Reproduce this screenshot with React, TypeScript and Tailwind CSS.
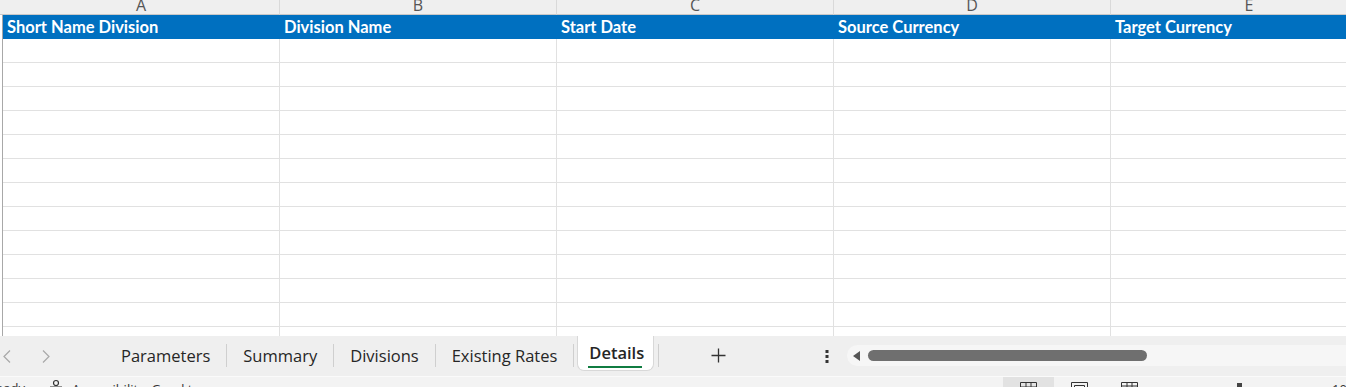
import React from 'react';

const COLS = ['A', 'B', 'C', 'D', 'E'];
const HEADERS = ['Short Name Division', 'Division Name', 'Start Date', 'Source Currency', 'Target Currency'];
const TABS = ['Parameters', 'Summary', 'Divisions', 'Existing Rates'];
const ROWS = Array.from({ length: 13 });

function Sheet() {
  return (
    <div className="flex h-[336px] overflow-hidden">
      <div className="w-[3px] shrink-0 flex flex-col">
        <div className="h-[15px] shrink-0 bg-[#efefef] border-b border-[#c8c8c8]" />
        <div className="flex-1 border-r border-[#a8a8a8]" />
      </div>
      {COLS.map((c, i) => (
        <div key={c} className="w-[277px] shrink-0 flex flex-col">
          <div className="h-[15px] shrink-0 overflow-hidden bg-[#efefef] border-b border-r border-b-[#c8c8c8] border-r-[#d9d9d9] text-center text-[16px] leading-[11px] text-[#555] font-['Open_Sans',sans-serif]">
            {c}
          </div>
          <div className="h-[24px] shrink-0 bg-[#0070c0] pl-[4px] text-white font-bold text-[16.5px] leading-[25px] font-['Lato',sans-serif] whitespace-nowrap">
            {HEADERS[i]}
          </div>
          {ROWS.map((_, r) => (
            <div key={r} className="h-[24px] shrink-0 border-b border-r border-[#e1e1e1]" />
          ))}
        </div>
      ))}
    </div>
  );
}

function Chevron({ flip }: { flip?: boolean }) {
  return (
    <svg width="8" height="13" viewBox="0 0 8 13" className={flip ? 'rotate-180' : ''}>
      <path d="M7 0.5L1 6.5l6 6" fill="none" stroke="#a8a8a8" strokeWidth="1.2" />
    </svg>
  );
}

function TabBar() {
  return (
    <div className="h-[40px] bg-[#efefef] flex items-start font-['Open_Sans',sans-serif] text-[16.5px] text-[#262626]">
      <div className="w-[105px] shrink-0 h-[34px] flex items-center pt-[6px]">
        <span className="ml-[3px]"><Chevron /></span>
        <span className="ml-[31px]"><Chevron flip /></span>
      </div>
      {TABS.map((t) => (
        <React.Fragment key={t}>
          <div className="h-[34px] shrink-0 flex items-center px-[16px] pt-[6px]">{t}</div>
          <div className="w-px shrink-0 h-[23px] mt-[8px] bg-[#cfcfcf]" />
        </React.Fragment>
      ))}
      <div className="ml-[3px] shrink-0 h-[35px] bg-white border border-t-0 border-[#d8d8d8] rounded-b-[7px] pl-[11px] pr-[9px] flex flex-col items-start">
        <span className="font-semibold text-[16.5px] mt-[6px] leading-[22px]">Details</span>
        <span className="w-[54px] h-[2px] bg-[#107c41] mt-[2px] -ml-[1px]" />
      </div>
      <div className="w-px shrink-0 h-[23px] mt-[8px] ml-[4px] bg-[#cfcfcf]" />
      <div className="w-[118px] shrink-0 h-[34px] flex items-center justify-center pt-[4px]">
        <svg width="15" height="15" viewBox="0 0 15 15" className="ml-[1px]">
          <path d="M7.5 0.5v14M0.5 7.5h14" stroke="#333" strokeWidth="1.3" />
        </svg>
      </div>
      <div className="w-[70px] shrink-0 h-[34px] flex items-center justify-end pr-[18px] pt-[6px]">
        <svg width="4" height="13" viewBox="0 0 4 13">
          <rect x="0.5" y="0" width="3" height="3" fill="#333" />
          <rect x="0.5" y="5" width="3" height="3" fill="#333" />
          <rect x="0.5" y="10" width="3" height="3" fill="#333" />
        </svg>
      </div>
      <div className="flex-1 h-[21px] mt-[9px] bg-[#f6f6f6] rounded-l-full flex items-center pl-[6px]">
        <svg width="8" height="10" viewBox="0 0 8 10">
          <path d="M7 0v10L0 5z" fill="#555" />
        </svg>
        <div className="ml-[7px] w-[279px] h-[11px] rounded-full bg-[#6f6f6f]" />
      </div>
    </div>
  );
}

function StatusBar() {
  return (
    <div className="h-[24px] bg-[#f3f3f3] border-t border-[#fafafa] flex items-start font-['Open_Sans',sans-serif] text-[13px] text-[#333]">
      <div className="w-[1003px] shrink-0 flex items-start">
        <span className="ml-[-12px] mt-[2px]">Ready</span>
        <svg width="18" height="18" viewBox="0 0 18 18" className="ml-[22px] mt-[2px]">
          <circle cx="9" cy="4" r="2.5" fill="none" stroke="#333" strokeWidth="1.2" />
          <path d="M3 8h12M9 8v8M6 16l3-5 3 5" fill="none" stroke="#333" strokeWidth="1.2" />
        </svg>
        <span className="ml-[7px] mt-[3px]">Accessibility: Good to go</span>
      </div>
      <div className="flex items-start">
        <div className="w-[51px] h-[24px] bg-[#e2e2e2] flex justify-center pt-[5px]">
          <svg width="17" height="14" viewBox="0 0 17 14">
            <path d="M0.5 0.5h16v13h-16zM0.5 5h16M6 0.5v13M11 0.5v13" fill="none" stroke="#333" />
          </svg>
        </div>
        <div className="w-[50px] flex justify-center pt-[5px]">
          <svg width="17" height="14" viewBox="0 0 17 14">
            <path d="M0.5 0.5h16v13h-16zM3.5 3.5h10v8h-10z" fill="none" stroke="#333" />
          </svg>
        </div>
        <div className="w-[50px] flex justify-center pt-[5px]">
          <svg width="17" height="14" viewBox="0 0 17 14">
            <path d="M0.5 0.5h16v13h-16zM0.5 4h16M6 0.5v13M11 0.5v13" fill="none" stroke="#333" />
          </svg>
        </div>
        <div className="w-[83px] h-[24px] relative">
          <div className="absolute left-[83px] top-[6px] w-[5px] h-[10px] bg-[#444]" />
        </div>
        <div className="w-[75px] h-[24px] relative">
          <div className="absolute left-[70px] top-[10px] w-px h-[4px] bg-[#666]" />
        </div>
        <span className="mt-[3px] ml-[20px]">100%</span>
      </div>
    </div>
  );
}

export default function App() {
  return (
    <div className="w-[1346px] h-[387px] overflow-hidden bg-white">
      <Sheet />
      <TabBar />
      <StatusBar />
    </div>
  );
}
